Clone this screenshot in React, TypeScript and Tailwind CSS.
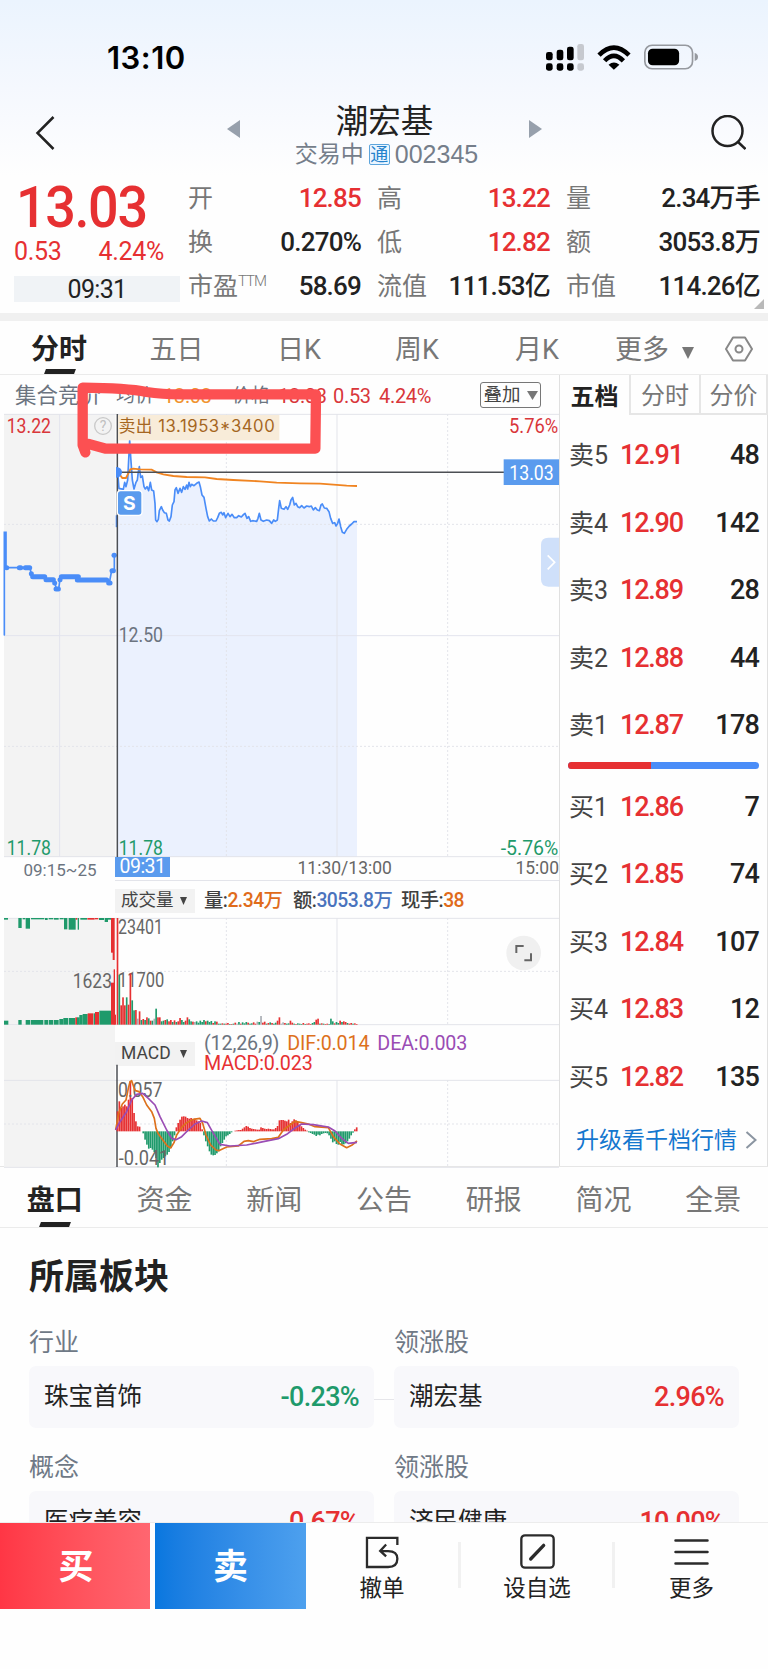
import type { ReactNode } from 'react'

type Point = [number, number]

const RED = '#e63032'
const GREEN = '#1f9a6b'
const BLUE = '#4a8df8'

const stats = [
  { label: '开', value: '12.85', red: true },
  { label: '高', value: '13.22', red: true },
  { label: '量', value: '2.34万手' },
  { label: '换', value: '0.270%' },
  { label: '低', value: '12.82', red: true },
  { label: '额', value: '3053.8万' },
  { label: '市盈', sup: 'TTM', value: '58.69' },
  { label: '流值', value: '111.53亿' },
  { label: '市值', value: '114.26亿' }
]

const asks = [
  ['卖5', '12.91', '48'],
  ['卖4', '12.90', '142'],
  ['卖3', '12.89', '28'],
  ['卖2', '12.88', '44'],
  ['卖1', '12.87', '178']
]

const bids = [
  ['买1', '12.86', '7'],
  ['买2', '12.85', '74'],
  ['买3', '12.84', '107'],
  ['买4', '12.83', '12'],
  ['买5', '12.82', '135']
]

const infoTabs = ['盘口', '资金', '新闻', '公告', '研报', '简况', '全景']

// Charts are plotted on a grid three times finer than the page
const pricePoints: Point[] = [
  [353, 307], [357, 355], [370, 358], [374, 337], [378, 350], [383, 330], [386, 270], [389, 212], [392, 260],
  [397, 330], [402, 357], [408, 337], [412, 330], [415, 305], [418, 290], [422, 322], [427, 318], [432, 350],
  [436, 357], [441, 350], [446, 362], [451, 337], [455, 360], [461, 363], [465, 400], [467, 450], [471, 455],
  [475, 448], [478, 422], [484, 410], [488, 420], [493, 428], [499, 430], [504, 450], [508, 453], [513, 440],
  [517, 405], [522, 395], [525, 360], [529, 353], [534, 370], [540, 355], [545, 367], [550, 350], [555, 358],
  [560, 345], [563, 357], [567, 337], [571, 350], [575, 343], [582, 347], [590, 340], [597, 336], [601, 350],
  [606, 375], [612, 382], [618, 415], [623, 440], [628, 453], [634, 447], [640, 453], [648, 453], [653, 443],
  [658, 430], [664, 427], [668, 435], [672, 428], [677, 443], [684, 430], [690, 440], [696, 433], [703, 443],
  [710, 443], [716, 437], [724, 441], [731, 433], [735, 430], [741, 445], [746, 440], [752, 454], [758, 452],
  [770, 454], [774, 445], [778, 430], [783, 450], [790, 454], [800, 450], [808, 452], [815, 460], [821, 450],
  [826, 454], [832, 450], [836, 415], [839, 392], [844, 415], [852, 418], [858, 410], [863, 418], [869, 405],
  [873, 390], [878, 382], [883, 405], [888, 400], [893, 410], [899, 413], [905, 407], [912, 414], [920, 408],
  [928, 410], [934, 408], [940, 420], [946, 413], [952, 420], [958, 422], [963, 405], [967, 402], [973, 414],
  [980, 415], [987, 425], [992, 445], [998, 460], [1004, 458], [1008, 468], [1013, 460], [1017, 447],
  [1022, 470], [1027, 487], [1033, 490], [1040, 478], [1048, 468], [1055, 462], [1062, 455], [1071, 455]
]

const avgPoints: Point[] = [
  [353, 300], [358, 312], [367, 324], [378, 324], [385, 310], [391, 298], [400, 296], [420, 298], [455, 299],
  [470, 307], [490, 313], [520, 318], [560, 321], [615, 322], [650, 327], [700, 330], [780, 334], [830, 338],
  [900, 340], [960, 341], [1000, 344], [1040, 347], [1071, 348]
]

// Matched segments of the call auction
const auctionRuns: [number, number, number][] = [
  [20, 20, 593], [58, 62, 593], [76, 89, 593], [94, 94, 611], [98, 134, 620], [138, 160, 629], [164, 164, 639],
  [168, 175, 657], [180, 180, 629], [184, 235, 620], [232, 320, 630], [326, 330, 639], [336, 340, 602], [342, 343, 556]
]

const difPoints: Point[] = [
  [347, 690], [356, 640], [367, 612], [378, 600], [385, 565], [390, 545], [395, 542], [401, 560], [406, 572],
  [417, 575], [428, 590], [440, 615], [455, 635], [463, 655], [468, 685], [474, 700], [490, 722], [502, 738],
  [512, 744], [522, 728], [530, 705], [545, 682], [560, 668], [580, 658], [600, 655], [608, 670], [618, 705],
  [632, 735], [648, 750], [656, 752], [680, 741], [715, 738], [732, 724], [745, 722], [760, 725], [780, 718],
  [815, 716], [835, 712], [850, 690], [870, 675], [885, 664], [905, 668], [925, 672], [945, 680], [985, 683],
  [1000, 710], [1020, 732], [1040, 743], [1055, 736], [1071, 723]
]

const deaPoints: Point[] = [
  [347, 690], [360, 665], [380, 635], [395, 600], [410, 583], [428, 580], [445, 595], [465, 615], [480, 650],
  [500, 690], [515, 715], [528, 719], [545, 710], [565, 690], [585, 672], [605, 663], [622, 668], [640, 700],
  [660, 733], [690, 738], [740, 735], [790, 725], [835, 716], [860, 703], [885, 684], [905, 672], [940, 674],
  [985, 681], [1005, 693], [1025, 715], [1045, 730], [1071, 727]
]

const macdBars = [
  60, 90, 70, 75, 80, 75, 95, 150, 100, 55, 30, 15, 14, 0, -6, -25, -40, -52, -50, -55, -62, -80, -108, -95, -85,
  -80, -75, -70, -62, -50, -30, -12, 12, 25, 35, 44, 45, 44, 40, 38, 40, 36, 38, 33, 30, 25, 6, -12, -30, -45, -60,
  -70, -72, -71, -66, -60, -45, -35, -25, -15, -12, -8, -3, 0, 2, 3, 4, 4, 8, 12, 16, 14, 10, 8, 7, 6, 5, 5, 12, 10,
  8, 7, 8, 7, 6, 6, 10, 16, 33, 34, 34, 32, 30, 35, 25, 30, 36, 33, 28, 20, 15, 10, 5, 2, -3, -5, -8, -10, -14, -10,
  -12, -8, -6, -5, -6, -12, -22, -33, -30, -38, -40, -32, -40, -39, -36, -30, -22, -12, -4, 6, 12
]

// height + colour (r / g / n for unchanged)
const volumeBars =
  '320r 150g 58r 82r 58r 82g 60r 154r 73g 43g 44r 18n 40r 14g 17r 14g 22r 19g 12r 12g 18n 48g 22r 22r 10g 12g 14r 16g 10r 14r 8g 13r 8g 10r 20r 14g 8g 12r 22r 16g 10g 9r 8n 10g 6g 12g 8g 14g 10r 12g 8g 11g 5r 10g 9r 3g 3g 4r 3g 3r 5r 2g 2r 3g 6r 3n 8g 3r 7g 4g 8g 6r 3g 4g 7r 3r 9n 8g 26n 6r 9r 3g 5r 7g 5r 3g 6g 12r 22r 3n 7n 5r 3g 4g 12r 6r 3g 2r 4g 3g 2g 5r 2g 3r 4r 2r 5g 8g 15r 18r 3g 4r 3g 2r 3r 2g 18g 10g 4r 8g 5g 12r 8g 10r 8r 5g 3r 5r 3g 4r 2r'
    .split(' ')

// x, width, height
const auctionTop: [number, number, number, string][] = [
  [12, 12, 5, GREEN], [55, 10, 30, GREEN], [68, 8, 4, GREEN], [77, 13, 32, GREEN], [93, 40, 4, GREEN],
  [135, 8, 6, GREEN], [146, 14, 4, GREEN], [162, 14, 5, GREEN], [179, 12, 4, GREEN], [192, 10, 34, GREEN],
  [206, 21, 35, GREEN], [227, 5, 5, RED], [233, 4, 35, GREEN], [241, 20, 5, GREEN], [262, 22, 5, RED],
  [285, 10, 4, RED], [297, 15, 6, GREEN], [314, 10, 12, GREEN], [324, 9, 5, GREEN], [333, 6, 104, RED],
  [338, 6, 126, RED]
]

const auctionBottom: [number, number, number, string][] = [
  [12, 13, 12, GREEN], [55, 10, 14, GREEN], [77, 13, 14, GREEN], [92, 38, 14, GREEN], [133, 12, 14, GREEN],
  [147, 12, 14, GREEN], [161, 15, 14, GREEN], [178, 12, 17, GREEN], [190, 14, 20, GREEN], [206, 20, 20, GREEN],
  [226, 6, 22, RED], [231, 8, 22, GREEN], [238, 10, 29, GREEN], [248, 15, 32, GREEN], [263, 17, 34, RED],
  [281, 4, 34, GREEN], [285, 12, 38, RED], [298, 35, 42, GREEN], [333, 10, 126, RED], [341, 4, 166, RED], [344, 4, 30, RED]
]

const toPath = (points: Point[]) => 'M' + points.map(([x, y]) => `${x} ${y}`).join('L')

const barColor: Record<string, string> = { r: RED, g: GREEN, n: '#a9adb3' }

function GridLines({ top, bottom, mid }: { top: number; bottom: number; mid: number[] }) {
  return (
    <g stroke="#e3e4ea" strokeWidth={3} fill="none">
      <path d={`M12 ${top + 1}H1677M12 ${bottom - 1}H1677M1011 ${top}V${bottom}`} />
      {mid.map(y => (
        <path key={y} d={`M12 ${y}H1677`} strokeDasharray="6 6" />
      ))}
      <path d={`M679 ${top}V${bottom}M1343 ${top}V${bottom}`} strokeDasharray="6 6" />
    </g>
  )
}

interface LabelProps {
  x: number
  y: number
  w: number
  size?: number
  fill?: string
  children: ReactNode
}

function Label({ x, y, w, size = 58, fill = '#6c7480', children }: LabelProps) {
  return (
    <text x={x} y={y} textLength={w} lengthAdjust="spacingAndGlyphs" fontSize={size} fill={fill}>
      {children}
    </text>
  )
}

function StatusBar() {
  return (
    <div className="flex h-[114px] items-center justify-between pl-[107px] pr-[70px]">
      <span className="[font-family:Inter,sans-serif] text-[31px] font-semibold tracking-[0.5px] text-black leading-none">
        13:10
      </span>
      <div className="flex items-center gap-[13px]">
        <svg className="h-[27px] w-[38px]" viewBox="75 39 114 81">
          <g fill="#000">
            <rect x="75" y="63" width="20" height="25" rx="7" />
            <rect x="107" y="56" width="20" height="32" rx="7" />
            <rect x="138" y="47" width="20" height="41" rx="7" />
            <rect x="75" y="97" width="20" height="22" rx="7" />
            <rect x="107" y="97" width="20" height="22" rx="7" />
            <rect x="138" y="97" width="20" height="22" rx="7" />
          </g>
          <g fill="#c6c9cf">
            <rect x="169" y="39" width="20" height="49" rx="7" />
            <rect x="169" y="97" width="20" height="22" rx="7" />
          </g>
        </svg>
        <svg className="h-[25px] w-[34px]" viewBox="228 40 101 76">
          <g fill="none" stroke="#000" strokeWidth="14">
            <path d="M233 71Q278 25 324 71" />
            <path d="M250 88Q278 58 307 88" />
          </g>
          <path d="M278 115L262 100Q278 86 295 100Z" />
        </svg>
        <svg className="h-[26px] w-[54px]" viewBox="368 40 163 78">
          <rect x="370.500" y="43.500" width="144" height="71" rx="22" fill="none" stroke="#96999f" strokeWidth="5" />
          <rect x="380" y="54" width="94" height="50" rx="14" />
          <path d="M521 67Q531 70 531 79T521 91Z" fill="#96999f" />
        </svg>
      </div>
    </div>
  )
}

function TitleBar() {
  return (
    <div className="flex h-[62px] items-start pl-[22px] pr-[22px]">
      <svg className="mt-[2px] h-9 w-[50px]" viewBox="0 0 50 36" fill="none" stroke="#222" strokeWidth="2.500">
        <path d="M31.500 1L15.500 17L31.500 33" />
      </svg>
      <div className="ml-[155px] flex w-[315px] items-start justify-between">
        <svg className="mt-[6px] h-[18px] w-[13px] fill-[#97a0ac]" viewBox="0 0 13 18">
          <path d="M13 0V18L0 9Z" />
        </svg>
        <div className="-mt-[8px] flex flex-col items-center">
          <h1 className="text-[32.500px] leading-[32px] text-[#222]">潮宏基</h1>
          <div className="ml-[4px] mt-[5px] flex items-center gap-[5px] text-[23px] leading-[23px] text-[#757e8a]">
            <span>交易中</span>
            <span className="flex h-[21px] w-[21px] items-center justify-center rounded-[2px] border border-[#5da5dc] bg-[#eaf5ff] text-[18px] leading-none text-[#2482cc]">
              通
            </span>
            <span className="[font-family:'Liberation_Sans',sans-serif] text-[25px]">002345</span>
          </div>
        </div>
        <svg className="mt-[6px] h-[18px] w-[13px] fill-[#97a0ac]" viewBox="0 0 13 18">
          <path d="M0 0V18L13 9Z" />
        </svg>
      </div>
      <svg className="ml-auto mt-[1px] h-9 w-9" viewBox="0 0 36 36" fill="none" stroke="#222" strokeWidth="2.500">
        <circle cx="17.500" cy="16" r="15" />
        <path d="M27.500 26.500L35.500 34" />
      </svg>
    </div>
  )
}

function Quote() {
  return (
    <section className="relative flex h-[137px] pl-[14px] pr-[8px]">
      <div className="w-[166px]">
        <div className="ml-[2px] mt-[3px] h-[56px] w-[138px] origin-left scale-x-[0.93] text-[58px] font-medium leading-[56px] tracking-[-1.500px] text-[#e63032]">
          13.03
        </div>
        <div className="flex h-[32px] items-center gap-[37px] text-[25px] leading-none tracking-[-0.3px] text-[#e63032]">
          <span>0.53</span>
          <span>4.24%</span>
        </div>
        <div className="mt-[9px] flex h-[26px] items-center justify-center bg-[#f0f3f6] text-[25px] leading-none tracking-[-0.7px] text-[#222]">
          09:31
        </div>
      </div>
      <div className="ml-[8px] grid h-[132px] flex-1 grid-cols-[173px_173px_194px] grid-rows-3 gap-x-[16px]">
        {stats.map(s => (
          <div key={s.label} className="flex items-center justify-between whitespace-nowrap leading-none">
            <span className="text-[25px] text-[#777]">
              {s.label}
              {s.sup && (
                <sup className="relative -top-[9px] align-baseline text-[15px] font-light tracking-[-1px] leading-none">{s.sup}</sup>
              )}
            </span>
            <span className={`text-[26px] font-medium tracking-[-0.8px] ${s.red ? 'text-[#e63032]' : 'text-[#222]'}`}>
              {s.value}
            </span>
          </div>
        ))}
      </div>
      <svg className="absolute bottom-[4px] right-[4px] h-[10px] w-[10px] fill-[#b9b9b9]" viewBox="0 0 10 10">
        <path d="M10 0V10H0Z" />
      </svg>
    </section>
  )
}

function PeriodTabs() {
  return (
    <nav className="relative flex h-[54px] items-center border-b border-[#ebebeb] pt-[5px] text-[27px] leading-none text-[#777]">
      <div className="flex w-[118px] items-center justify-center font-bold text-[#222]">
        <span className="text-[28px]">分时</span>
        <i className="absolute bottom-0 left-[45px] h-[5px] w-[30px] -skew-x-[20deg] bg-[#222]" />
      </div>
      <span className="w-[117px] text-center">五日</span>
      <span className="w-[128px] text-center">日K</span>
      <span className="w-[108px] text-center">周K</span>
      <span className="w-[132px] text-center">月K</span>
      <span className="flex w-[122px] items-center gap-[13px] pl-[12px]">
        更多
        <svg className="mt-[5px] h-[12px] w-[12px] fill-[#777]" viewBox="0 0 12 12">
          <path d="M0 0H12L6 12Z" />
        </svg>
      </span>
      <svg className="-mt-[3px] h-[26px] w-[28px]" viewBox="0 0 28 26" fill="none" stroke="#888" strokeWidth="2">
        <path d="M8 1.500H20L27 13L20 24.500H8L1 13Z" strokeLinejoin="round" />
        <circle cx="14" cy="13" r="3.500" />
      </svg>
    </nav>
  )
}

function PriceChart() {
  return (
    <svg className="block h-[443px] w-[559px] overflow-visible" viewBox="0 132 1677 1329">
      <rect x="12" y="132" width="334" height="1329" fill="#f3f3f3" />
      <path d={`${toPath(pricePoints)}V1461H353Z`} fill="#ebf1fe" />
      <GridLines top={132} bottom={1461} mid={[463, 1129]} />
      <path d="M12 797H1677M179 132V1461" stroke="#e3e4ee" strokeWidth={3} />

      <g stroke={BLUE} strokeLinecap="round" fill="none">
        <path
          d="M13 795V487H18V593H90L95 620H136L140 629H160L170 657H176L181 620H235L238 630H320L328 639L335 602H343V556"
          strokeWidth={5}
        />
        <path d="M349 470V437" strokeWidth={4} />
        {auctionRuns.map(([x1, x2, y]) => (
          <path key={x1} d={`M${x1} ${y}H${x2 + 0.1}`} strokeWidth={15} />
        ))}
      </g>
      <path d={toPath(pricePoints)} fill="none" stroke={BLUE} strokeWidth={5} strokeLinejoin="round" />
      <path d={toPath(avgPoints)} fill="none" stroke="#f08421" strokeWidth={5.5} />

      <path d="M352 132V1461M352 307H1677" stroke="#4c4f54" strokeWidth={4.5} />
      <path d="M350 293A14 14 0 0 1 350 321Z" fill={BLUE} stroke={BLUE} strokeWidth={4} />
      <rect x="352" y="362" width="74" height="74" rx="10" fill="#5a9bee" stroke="#fff" strokeWidth={4} />
      <text x="388" y="419" fontSize="58" fontWeight="700" fill="#fff" textAnchor="middle" className="[font-family:Inter,sans-serif]">
        S
      </text>

      <rect x="354" y="135" width="484" height="76" fill="#f8ecd9" />
      <text x="356" y="185" textLength="468" fontSize="50" fill="#a5661f" className="[font-family:Inter,'Noto_Sans_CJK_SC',sans-serif]">
        卖出 13.1953*3400
      </text>
      <circle cx="309" cy="168" r="25" fill="none" stroke="#c9c9c9" strokeWidth={4} />
      <text x="309" y="183" fontSize="42" fill="#c0c0c0" textAnchor="middle">?</text>

      <Label x={20} y={188} w={133} fill="#d9363a">13.22</Label>
      <Label x={356} y={817} w={133}>12.50</Label>
      <Label x={20} y={1454} w={133} fill={GREEN}>11.78</Label>
      <Label x={356} y={1454} w={133} fill={GREEN}>11.78</Label>
      <Label x={1527} y={188} w={148} fill="#d9363a">5.76%</Label>
      <Label x={1502} y={1454} w={173} fill={GREEN}>-5.76%</Label>

      <rect x="1511" y="268" width="166" height="77" fill="#5a9bee" />
      <Label x={1528} y={329} w={133} fill="#fff">13.03</Label>
      <path d="M1677 503H1645Q1623 503 1623 525V628Q1623 650 1645 650H1677Z" fill="#cfe0fa" />
      <path d="M1643 556L1664 577L1643 598" fill="none" stroke="#fff" strokeWidth={5} />
    </svg>
  )
}

function VolumeChart() {
  return (
    <svg className="block h-[107px] w-[559px] overflow-visible" viewBox="0 54 1677 321">
      <rect x="12" y="54" width="334" height="321" fill="#f3f3f3" />
      <GridLines top={54} bottom={375} mid={[214]} />
      <Label x={354} y={101} w={135} fill="#666">23401</Label>
      <Label x={218} y={264} w={118} fill="#666">1623</Label>
      <Label x={354} y={260} w={139} fill="#666">11700</Label>
      {auctionTop.map(([x, w, h, color]) => (
        <rect key={x} x={x} y={54} width={w} height={h} fill={color} />
      ))}
      {auctionBottom.map(([x, w, h, color]) => (
        <rect key={x} x={x} y={374 - h} width={w} height={h} fill={color} />
      ))}
      {volumeBars.map((bar, i) => {
        const h = parseInt(bar)
        return <rect key={i} x={350 + i * 5.52} y={374 - h} width={5} height={h} fill={barColor[bar.slice(-1)]} />
      })}
      <circle cx="1571" cy="159" r="52" fill="#f0f0f0" />
      <path d="M1549 159V138H1571M1573 181H1593V160" fill="none" stroke="#666" strokeWidth={6} />
    </svg>
  )
}

function MacdChart() {
  return (
    <svg className="block h-[87px] w-[559px] overflow-visible" viewBox="0 540 1677 261">
      <rect x="12" y="540" width="334" height="261" fill="#f3f3f3" />
      <GridLines top={540} bottom={803} mid={[672]} />
      <path d="M351 494V801" stroke="#4c4f54" strokeWidth={4.5} />
      {macdBars.map((v, i) => (
        <rect
          key={i}
          x={350 + i * 5.52}
          y={v > 0 ? 694 - v : 694}
          width={5}
          height={Math.abs(v)}
          fill={v > 0 ? RED : GREEN}
        />
      ))}
      <Label x={354} y={591} w={133} fill="#666">0.057</Label>
      <Label x={356} y={796} w={152} fill="#666">-0.041</Label>
      <path d={toPath(difPoints)} fill="none" stroke="#dd711c" strokeWidth={5} strokeLinejoin="round" />
      <path d={toPath(deaPoints)} fill="none" stroke="#9a4cb4" strokeWidth={5} strokeLinejoin="round" />
    </svg>
  )
}

function IndicatorButton({ children }: { children: ReactNode }) {
  return (
    <div className="flex h-[24px] w-[80px] shrink-0 items-center justify-between bg-[#f2f2f2] pl-[6px] pr-[8px] text-[17.500px] leading-none text-[#444]">
      {children}
      <svg className="h-[8px] w-[7px] fill-[#444]" viewBox="0 0 7 8">
        <path d="M0 0H7L3.500 8Z" />
      </svg>
    </div>
  )
}

function ChartColumn() {
  return (
    <div className="relative w-[559px] shrink-0">
      <div className="flex h-[39px] items-center whitespace-nowrap pl-[15px] pt-[2px] text-[20px] leading-none tracking-[-0.3px] text-[#6c7480]">
        <span className="w-[101px] text-[21.500px] tracking-normal">集合竞价</span>
        <span className="w-[47px] text-[19px] tracking-normal">均价</span>
        <span className="w-[69px] text-[#f0932e]">13.03</span>
        <span className="w-[46px] text-[19px] tracking-normal">价格</span>
        <span className="w-[55px] text-[#d9363a]">13.03</span>
        <span className="w-[46px] text-[#d9363a]">0.53</span>
        <span className="w-[101px] text-[#d9363a]">4.24%</span>
        <span className="-mt-[2px] flex h-[26px] w-[61px] items-center justify-center gap-[6px] rounded-[3px] border border-[#777] pt-px text-[18.500px] tracking-normal text-[#444]">
          叠加
          <svg className="h-[9px] w-[11px] fill-[#777]" viewBox="0 0 11 9">
            <path d="M0 0H11L5.500 9Z" />
          </svg>
        </span>
      </div>

      <PriceChart />

      <div className="flex h-[24px] leading-none">
        <div className="w-[115px] pl-[5px] pt-[5px] text-center text-[17px] text-[#6c7480]">09:15~25</div>
        <div className="flex flex-1 items-start justify-between border-b border-[#e3e4ea] text-[17.500px] text-[#666]">
          <span className="flex h-[20px] w-[55px] items-center justify-center bg-[#5a9bee] text-[19.500px] tracking-[-0.5px] text-white">
            09:31
          </span>
          <span className="ml-[4px] pt-[3px] text-[17.500px]">11:30/13:00</span>
          <span className="pt-[3px] text-[17.500px]">15:00</span>
        </div>
      </div>

      <div className="flex h-[37px] items-center whitespace-nowrap pl-[115px] pt-[2px] text-[19.300px] font-medium leading-none tracking-[-0.5px] text-[#3f3f3f]">
        <div className="font-normal tracking-normal">
          <IndicatorButton>成交量</IndicatorButton>
        </div>
        <span className="ml-[9px] w-[89px]">
          量:<span className="text-[#e06b1a]">2.34万</span>
        </span>
        <span className="w-[108px]">
          额:<span className="text-[#4a73bd]">3053.8万</span>
        </span>
        <span>
          现手:<span className="text-[#e06b1a]">38</span>
        </span>
      </div>

      <VolumeChart />

      <div className="flex h-[55px] pl-[4px]">
        <div className="w-[111px] shrink-0 bg-[#f3f3f3]" />
        <div className="pt-[17px]">
          <IndicatorButton>MACD</IndicatorButton>
        </div>
        <div className="flex flex-wrap content-start gap-x-[8px] pl-[9px] pt-[9px] text-[19.700px] leading-[19.500px] tracking-[-0.15px]">
          <span className="text-[#6c7480]">(12,26,9)</span>
          <span className="text-[#dd711c]">DIF:0.014</span>
          <span className="text-[#9a4cb4]">DEA:0.003</span>
          <span className="text-[#e63032]">MACD:0.023</span>
        </div>
      </div>

      <MacdChart />

      {/* Hand-drawn marker around the sell record */}
      <svg className="pointer-events-none absolute left-0 top-0 h-[90px] w-[558px]" viewBox="0 15 1674 270" fill="none">
        <path
          d="M256 247L248 225V53Q380 54 440 66Q490 74 560 73H948L946 236H318L266 222"
          stroke="#fc5052"
          strokeWidth="31"
          strokeLinecap="round"
          strokeLinejoin="round"
        />
      </svg>
    </div>
  )
}

function BookRow({ row }: { row: string[] }) {
  const [label, price, qty] = row
  return (
    <div className="flex h-[67.500px] items-center pl-[9px] pr-[8px] leading-none">
      <span className="w-[51px] text-[25px] text-[#444]">{label}</span>
      <span className="text-[27px] font-medium tracking-[-1.200px] text-[#e63032]">{price}</span>
      <span className="ml-auto text-[27px] font-medium tracking-[-0.800px] text-[#222]">{qty}</span>
    </div>
  )
}

function OrderBook() {
  return (
    <div className="flex flex-1 flex-col border-l border-[#e0e0e0]">
      <div className="flex h-[40px] shrink-0 text-[24px] leading-none text-[#777]">
        <span className="flex w-[69px] items-center justify-center pt-[3px] font-bold text-[#222]">五档</span>
        <span className="flex w-[70px] items-center justify-center border-b-2 border-l-2 border-[#e6e6e6] pt-[3px]">分时</span>
        <span className="flex flex-1 items-center justify-center border-b-2 border-x-2 border-[#e6e6e6] pt-[3px]">分价</span>
      </div>
      <div className="flex-1 border-r border-[#e0e0e0] pt-[7px]">
        {asks.map(row => (
          <BookRow key={row[0]} row={row} />
        ))}
        <div className="mb-[5px] ml-[8px] mr-[8px] mt-[2px] flex h-[7px] overflow-hidden rounded-full bg-[#4a8df8]">
          <div className="w-[43.200%] bg-[#e63032]" />
        </div>
        {bids.map(row => (
          <BookRow key={row[0]} row={row} />
        ))}
        <div className="flex h-[55px] items-center justify-between pl-[16px] pr-[10px] pt-[3px] text-[23px] leading-none text-[#1577cf]">
          升级看千档行情
          <svg className="h-[18px] w-[12px]" viewBox="0 0 12 18" fill="none" stroke="#8b95a1" strokeWidth="2">
            <path d="M1.500 1L10.500 9L1.500 17" />
          </svg>
        </div>
      </div>
    </div>
  )
}

interface SectorProps {
  title: string
  name: string
  change: string
  down?: boolean
}

function Sector({ title, name, change, down }: SectorProps) {
  return (
    <div>
      <div className="h-[38px] text-[25px] leading-[29px] text-[#6f7986]">{title}</div>
      <div className="flex h-[62px] items-center justify-between rounded-[7px] bg-[#f8f8fb] px-[15px] pt-px text-[24.500px] leading-none text-[#222]">
        <span>{name}</span>
        <span className={`text-[27px] font-medium tracking-[-0.7px] ${down ? 'text-[#1f9a6b]' : 'text-[#e63032]'}`}>{change}</span>
      </div>
    </div>
  )
}

function BottomBar() {
  return (
    <footer className="flex h-[147px] items-start border-t border-[#ececec] bg-[#fefefe] leading-none">
      <button className="mr-[5px] h-[86px] w-[150px] bg-linear-to-r from-[#ff3645] to-[#ff6670] pl-[2px] pt-[2px] text-[35px] font-bold text-white">买</button>
      <button className="h-[86px] w-[151px] bg-linear-to-r from-[#0877df] to-[#4da0ee] pt-[2px] text-[35px] font-bold text-white">卖</button>
      <div className="flex flex-1 pt-[11px] text-[22.500px] text-[#222]">
        <div className="flex w-[152px] flex-col items-center gap-[8px]">
          <svg className="h-[35px] w-[35px]" viewBox="78 72 106 106" fill="none" stroke="#2b2b2b" strokeWidth="7">
            <path d="M176 105V84H84V172H148Q176 172 176 147Q176 124 148 124H126M142 104L124 123L142 140" />
          </svg>
          撤单
        </div>
        <i className="mt-[8px] h-[46px] w-[3px] bg-[#f1f1f1]" />
        <div className="flex w-[151px] flex-col items-center gap-[8px] pl-px">
          <svg className="h-[35px] w-[35px]" viewBox="538 71 105 105" fill="none" stroke="#2b2b2b" strokeWidth="7">
            <rect x="542" y="75" width="97" height="97" rx="11" />
            <path d="M570 146L609 105" strokeWidth="10" strokeLinecap="round" />
          </svg>
          设自选
        </div>
        <i className="mt-[8px] h-[46px] w-[3px] bg-[#f1f1f1]" />
        <div className="flex flex-1 flex-col items-center gap-[8px]">
          <svg className="h-[35px] w-[35px]" viewBox="0 0 35 35" fill="none" stroke="#2b2b2b" strokeWidth="2.500" strokeLinecap="round">
            <path d="M1.500 6.500H33.500M1.500 18H33.500M1.500 29.500H33.500" />
          </svg>
          更多
        </div>
      </div>
    </footer>
  )
}

export default function App() {
  return (
    <div className="flex h-[1669px] w-[768px] flex-col overflow-hidden bg-[#fefefe] text-[#222] [font-family:Roboto,'Noto_Sans_CJK_SC',sans-serif]">
      <header className="bg-linear-to-b from-[#ebf4fe] via-[#f5f8fe] to-[#fefefe]">
        <StatusBar />
        <TitleBar />
      </header>
      <Quote />
      <div className="h-[8px] shrink-0 bg-[#f0f0f0]" />
      <PeriodTabs />

      <main className="flex h-[792px] shrink-0 border-b border-[#e6e6e6]">
        <ChartColumn />
        <OrderBook />
      </main>

      <nav className="relative grid h-[61px] shrink-0 grid-cols-7 items-center border-b border-[#ebebeb] pt-[7px] text-center text-[28px] leading-none text-[#777]">
        {infoTabs.map((tab, i) => (
          <span key={tab} className={i === 0 ? 'font-bold text-[#222]' : ''}>
            {tab}
          </span>
        ))}
        <i className="absolute bottom-0 left-[40px] h-[5px] w-[30px] -skew-x-[20deg] bg-[#222]" />
      </nav>

      <section className="h-[294px] shrink-0 overflow-hidden pl-[29px] pr-[29px] pt-[30px]">
        <h2 className="h-[70px] text-[35px] font-bold leading-[40px]">所属板块</h2>
        <div className="relative grid grid-cols-[345px_345px] gap-x-[20px] gap-y-[25px]">
          <Sector title="行业" name="珠宝首饰" change="-0.23%" down />
          <Sector title="领涨股" name="潮宏基" change="2.96%" />
          <i className="absolute left-[345px] top-[71px] h-px w-[20px] bg-[#e6e6ea]" />
          <Sector title="概念" name="医疗美容" change="0.67%" />
          <Sector title="领涨股" name="济民健康" change="10.00%" />
        </div>
      </section>

      <BottomBar />
    </div>
  )
}
